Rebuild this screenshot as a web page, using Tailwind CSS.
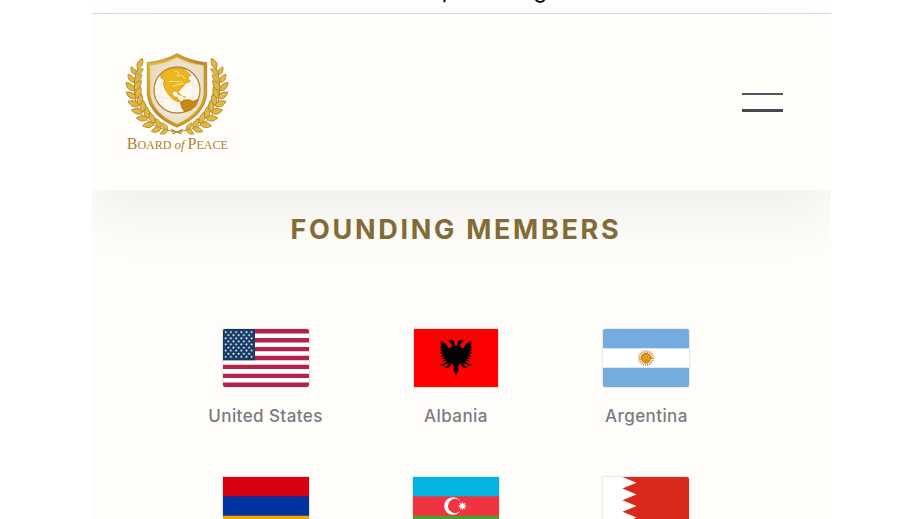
<!DOCTYPE html>
<html lang="en">
  <head>
    <meta charset="UTF-8" />
    <meta name="viewport" content="width=device-width, initial-scale=1.0" />
    <title>Board of Peace</title>
    <script src="https://cdn.jsdelivr.net/npm/@tailwindcss/browser@4"></script>
  </head>
  <body class="h-screen overflow-hidden bg-white font-['Inter',sans-serif]">
    <div class="w-4/5 mx-auto h-full flex flex-col overflow-hidden bg-[#fefdf9]">
      <div class="h-[14px] shrink-0 flex items-end justify-center overflow-hidden bg-white border-b border-[#dcdcdc] pb-[11px] pr-4">
        <p class="text-[22px] leading-6 text-black">boardofpeace.org</p>
      </div>

      <header class="relative z-10 shrink-0 h-44 flex items-center justify-between pl-[31px] pr-12 bg-[#fefdf9] shadow-[0_24px_56px_0_rgba(0,0,0,0.06)]">
        <a href="#" class="flex flex-col items-center">
          <svg class="w-[108px] h-[84px]" viewBox="40 36 324 252" aria-hidden="true">
            <defs>
              <linearGradient id="gold" x1="0" y1="0" x2="1" y2="1">
                <stop offset="0" stop-color="#e8c23c" />
                <stop offset=".5" stop-color="#bd8c22" />
                <stop offset="1" stop-color="#dcae35" />
              </linearGradient>
              <radialGradient id="panel">
                <stop offset="0" stop-color="#fffdf8" />
                <stop offset="1" stop-color="#e9dcc6" />
              </radialGradient>
              <path id="leaf" d="M0 0C7-12 23-12 35 0C23 9 9 10 0 0Z" fill="#e2b83f" stroke="#a9812b" stroke-width="2.5" />
              <g id="pair">
                <use href="#leaf" transform="rotate(-42)" />
                <use href="#leaf" transform="rotate(40)" />
              </g>
              <g id="branch">
                <path d="M218 276C120 274 74 220 74 150C74 115 80 90 92 68" fill="none" stroke="#b58a2c" stroke-width="3" />
                <use href="#pair" transform="translate(174 268) rotate(190) scale(.75)" />
                <use href="#pair" transform="translate(154 262) rotate(198) scale(.9)" />
                <use href="#pair" transform="translate(133 250) rotate(210)" />
                <use href="#pair" transform="translate(115 234) rotate(222)" />
                <use href="#pair" transform="translate(100 216) rotate(232)" />
                <use href="#pair" transform="translate(88 196) rotate(242)" />
                <use href="#pair" transform="translate(80 174) rotate(252)" />
                <use href="#pair" transform="translate(75 151) rotate(264)" />
                <use href="#pair" transform="translate(75 127) rotate(273) scale(.9)" />
                <use href="#pair" transform="translate(79 104) rotate(281) scale(.8)" />
                <use href="#leaf" transform="translate(85 86) rotate(294) scale(.95)" />
              </g>
            </defs>
            <use href="#branch" />
            <use href="#branch" transform="translate(404 0) scale(-1 1)" />
            <path d="M184 268L216 282M220 268L188 282" stroke="#b58a2c" stroke-width="4" />
            <path d="M202 41Q162 63 113 68V165Q120 228 202 262Q284 228 291 165V68Q242 63 202 41Z" fill="url(#gold)" stroke="#9c7420" stroke-width="2" />
            <path d="M202 53Q164 73 123 77V164Q130 220 202 251Q274 220 281 164V77Q240 73 202 53Z" fill="url(#panel)" stroke="#f6e08c" stroke-width="2" />
            <circle cx="202" cy="150" r="69" fill="#fdf8ee" stroke="#b4883a" stroke-width="4" />
            <path d="M135 140Q202 112 269 140M134 165Q202 190 270 165M202 82V218M165 93Q140 150 165 207M239 93Q264 150 239 207" fill="none" stroke="#ead9b8" stroke-width="1.5" />
            <path d="M153 105L168 91L190 84L214 84L226 90L236 98L243 106L234 114L242 124L228 129L220 140L212 148L207 154L208 162L200 154L190 153L187 160L193 170L202 172L207 180L213 184L206 186L190 178L178 165L166 148L161 130L164 119L154 114Z" fill="#edb51f" stroke="#c68c12" stroke-width="2" />
            <path d="M194 92L208 98L202 108L218 106L224 116M178 124L212 125M188 139L222 129" fill="none" stroke="#f9e19a" stroke-width="3" />
            <path d="M212 188L222 180L238 179L250 184L266 178L259 197L244 210L226 216L217 205Z" fill="#c88717" stroke="#a36b10" stroke-width="2" />
            <path d="M204 162L216 166M220 170L228 171" stroke="#c68c12" stroke-width="3" />
          </svg>
          <span class="font-['Liberation_Serif',serif] text-[12px] leading-4 text-[#a9812f] whitespace-nowrap"><span class="text-[16px]">B</span>OARD <i class="text-[13px]">of</i> <span class="text-[16px]">P</span>EACE</span>
        </a>
        <button type="button" aria-label="Open menu" class="w-[41px] flex flex-col gap-[14px]">
          <span class="h-[2px] bg-[#55555f]"></span>
          <span class="h-[3px] bg-[#484851]"></span>
        </button>
      </header>

      <main class="pl-[78px] pr-[89px] pt-5">
        <h1 class="relative z-20 text-center text-[27px] leading-10 font-bold tracking-widest text-[#836b37]">FOUNDING MEMBERS</h1>

        <ul class="grid grid-cols-3 gap-y-[49px] pt-[79px] text-[17px] leading-6 tracking-wide font-medium text-[#7a7a84]">
          <li class="flex flex-col items-center gap-[17px]">
            <svg class="w-[86px] h-[58px] rounded-xs shadow-[0_0_2px_rgba(0,0,0,0.3)]" viewBox="0 0 86 58" preserveAspectRatio="none" aria-hidden="true">
              <defs>
                <pattern id="stars" x="1.4" y="0" width="5.2" height="6.2" patternUnits="userSpaceOnUse">
                  <circle cx="1.3" cy="2" r="1" fill="#fff" />
                  <circle cx="3.9" cy="5.1" r="1" fill="#fff" />
                </pattern>
              </defs>
              <rect width="86" height="58" fill="#fff" />
              <path d="M0 2.2H86M0 11.2H86M0 20.1H86M0 29H86M0 37.9H86M0 46.9H86M0 55.8H86" stroke="#b22349" stroke-width="4.4" />
              <rect width="32" height="31.2" fill="#163a66" />
              <rect x="1.4" y="0" width="28.8" height="28.5" fill="url(#stars)" transform="translate(0 1)" />
            </svg>
            <span>United States</span>
          </li>
          <li class="flex flex-col items-center gap-[17px]">
            <svg class="w-[84px] h-[58px] shadow-[0_0_2px_rgba(0,0,0,0.3)]" viewBox="0 0 84 58" preserveAspectRatio="none" aria-hidden="true">
              <defs>
                <path id="eagle" d="M42 18L40.5 15L40 12L37 10.5L33.5 12L36.5 12.5L35 14L38 14.5L37.5 18L35 19.5L32 15L29 13L26 11L28 14.5L25.5 14L28.5 17.5L25.5 17L28.5 20.5L25.5 20L28.5 23.5L25.5 23.5L29 26L26 27L30.5 28L27 30L32 30L28 32.5L34 31.5L29 35L26 35L27 37L29 36L30 38L31 35.5L35.5 33.5L33 37L31 39L34 39L36 37L37.5 35L39 34.5L38.5 37.5L40.5 37.5L39.5 41L42 46Z" />
              </defs>
              <rect width="84" height="58" fill="#fe0000" />
              <use href="#eagle" />
              <use href="#eagle" transform="translate(84 0) scale(-1 1)" />
            </svg>
            <span>Albania</span>
          </li>
          <li class="flex flex-col items-center gap-[17px]">
            <svg class="w-[86px] h-[58px] rounded-xs shadow-[0_0_2px_rgba(0,0,0,0.3)]" viewBox="0 0 86 58" preserveAspectRatio="none" aria-hidden="true">
              <rect width="86" height="58" fill="#74acdf" />
              <rect y="19.3" width="86" height="19.4" fill="#fff" />
              <circle cx="43" cy="29" r="6" fill="none" stroke="#d79b45" stroke-width="4" stroke-dasharray="1 .8" />
              <circle cx="43" cy="29" r="4.4" fill="#f5a20d" stroke="#a9662a" stroke-width="1" />
              <path d="M41 28H42M44 28H45M41.5 31H44.5" stroke="#985214" stroke-width=".7" />
            </svg>
            <span>Argentina</span>
          </li>
          <li class="flex flex-col items-center">
            <svg class="w-[86px] h-[58px] shadow-[0_0_2px_rgba(0,0,0,0.3)]" viewBox="0 0 86 58" preserveAspectRatio="none" role="img" aria-label="Armenia">
              <rect width="86" height="20" fill="#d90012" />
              <rect y="19.3" width="86" height="20" fill="#0033a0" />
              <rect y="38.7" width="86" height="19.3" fill="#f2a800" />
            </svg>
          </li>
          <li class="flex flex-col items-center">
            <svg class="w-[86px] h-[58px] shadow-[0_0_2px_rgba(0,0,0,0.3)]" viewBox="0 0 86 58" preserveAspectRatio="none" role="img" aria-label="Azerbaijan">
              <rect width="86" height="20" fill="#00b5e2" />
              <rect y="19.3" width="86" height="20" fill="#ef3340" />
              <rect y="38.7" width="86" height="19.3" fill="#509e2f" />
              <circle cx="40" cy="29" r="8.8" fill="#fff" />
              <circle cx="42.2" cy="29" r="7.2" fill="#ef3340" />
              <path d="M49.5 24.5L50.4 26.9L52.7 25.8L51.6 28.1L54 29L51.6 29.9L52.7 32.2L50.4 31.1L49.5 33.5L48.6 31.1L46.3 32.2L47.4 29.9L45 29L47.4 28.1L46.3 25.8L48.6 26.9Z" fill="#fff" />
            </svg>
          </li>
          <li class="flex flex-col items-center">
            <svg class="w-[86px] h-[58px] rounded-xs shadow-[0_0_2px_rgba(0,0,0,0.3)]" viewBox="0 0 86 58" preserveAspectRatio="none" role="img" aria-label="Bahrain">
              <rect width="86" height="58" fill="#fff" />
              <path d="M86 0H19.5L33.5 5.8L19.5 11.6L33.5 17.4L19.5 23.2L33.5 29L19.5 34.8L33.5 40.6L19.5 46.4L33.5 52.2L19.5 58H86Z" fill="#da291c" />
            </svg>
          </li>
        </ul>
      </main>
    </div>
  </body>
</html>
